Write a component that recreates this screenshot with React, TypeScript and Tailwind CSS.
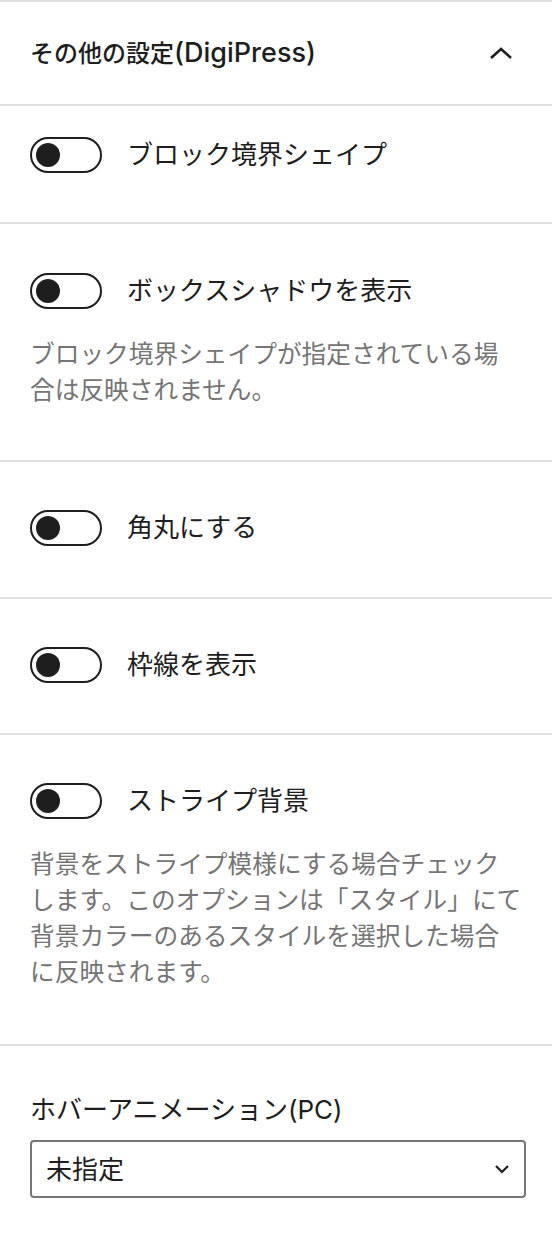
import React from 'react';

const font = { fontFamily: 'Inter, "Noto Sans CJK JP", sans-serif' };

const Toggle = ({ label }: { label: string }) => (
  <div className="flex items-center gap-[25px]">
    <div className="w-[72px] h-[36px] rounded-full border-2 border-[#1e1e1e] flex items-center pl-[4px] shrink-0">
      <div className="w-[24px] h-[24px] rounded-full bg-[#1e1e1e]" />
    </div>
    <span className="text-[26px] leading-[36px] text-[#1e1e1e]">{label}</span>
  </div>
);

const Help = ({ children }: { children: React.ReactNode }) => (
  <p className="mt-[27px] mb-[5px] text-[24.7px] leading-[36px] text-[#757575] whitespace-nowrap">{children}</p>
);

export default function App() {
  return (
    <div className="w-[552px] min-h-[1236px] bg-white border-t-2 border-[#e0e0e0]" style={font}>
      <div className="h-[104px] flex items-center justify-between pl-[30px] pr-[38px] border-b-2 border-[#e0e0e0]">
        <h2 className="text-[24px] font-medium text-[#1e1e1e]">
          その他の設定<span className="text-[27px]">(DigiPress)</span>
        </h2>
        <svg width="26" height="16" viewBox="0 0 26 16" fill="none">
          <path d="M3 13 L13 4 L23 13" stroke="#1e1e1e" strokeWidth="2.6" />
        </svg>
      </div>

      <div className="px-[30px] pt-[31px] pb-[49px] border-b-2 border-[#e0e0e0]">
        <Toggle label="ブロック境界シェイプ" />
      </div>

      <div className="px-[30px] pt-[49px] pb-[47px] border-b-2 border-[#e0e0e0]">
        <Toggle label="ボックスシャドウを表示" />
        <Help>
          ブロック境界シェイプが指定されている場
          <br />
          合は反映されません。
        </Help>
      </div>

      <div className="px-[30px] pt-[48px] pb-[51px] border-b-2 border-[#e0e0e0]">
        <Toggle label="角丸にする" />
      </div>

      <div className="px-[30px] pt-[48px] pb-[50px] border-b-2 border-[#e0e0e0]">
        <Toggle label="枠線を表示" />
      </div>

      <div className="px-[30px] pt-[48px] pb-[49px] border-b-2 border-[#e0e0e0]">
        <Toggle label="ストライプ背景" />
        <Help>
          背景をストライプ模様にする場合チェック
          <br />
          します。このオプションは「スタイル」にて
          <br />
          背景カラーのあるスタイルを選択した場合
          <br />
          に反映されます。
        </Help>
      </div>

      <div className="pl-[30px] pr-[26px] pt-[46px]">
        <label className="block text-[26px] leading-[35px] text-[#1e1e1e]">ホバーアニメーション(PC)</label>
        <div className="mt-[13px] h-[58px] rounded-[4px] border-2 border-[#757575] flex items-center justify-between pl-[14px] pr-[14px]">
          <span className="text-[26px] text-[#1e1e1e]">未指定</span>
          <svg width="16" height="10" viewBox="0 0 16 10" fill="none">
            <path d="M2 2 L8 8 L14 2" stroke="#1e1e1e" strokeWidth="2.2" />
          </svg>
        </div>
      </div>
    </div>
  );
}
